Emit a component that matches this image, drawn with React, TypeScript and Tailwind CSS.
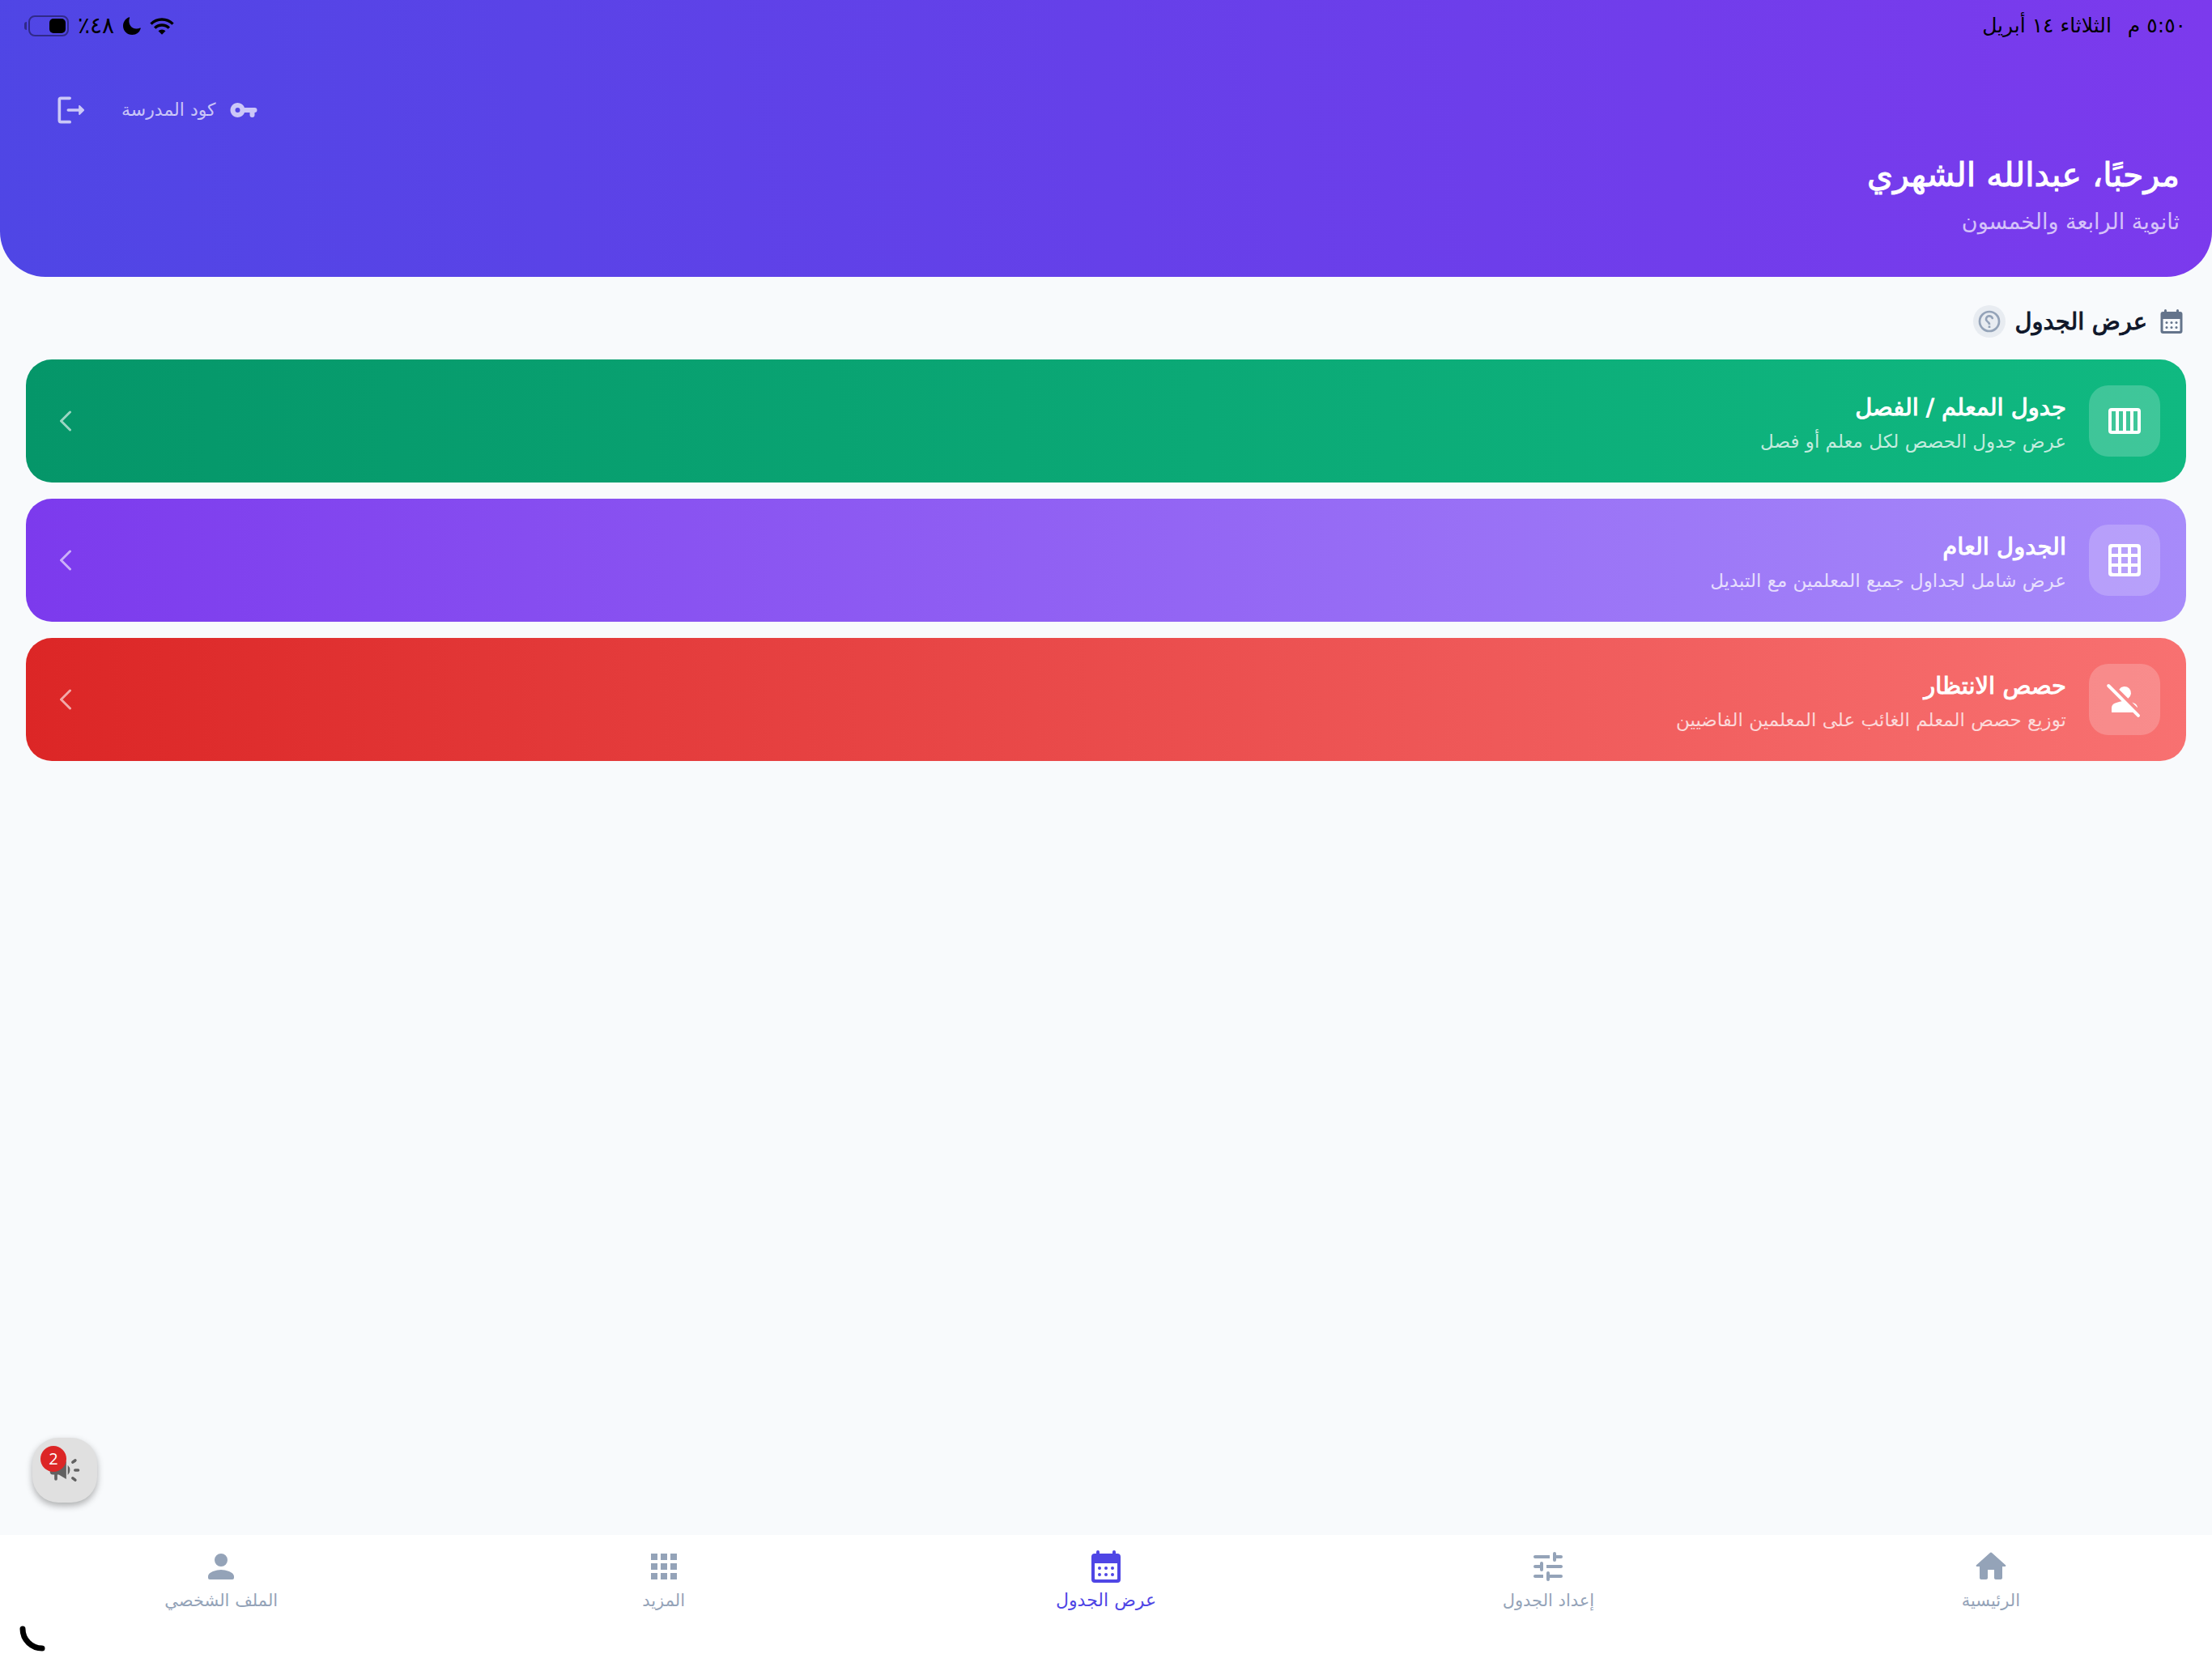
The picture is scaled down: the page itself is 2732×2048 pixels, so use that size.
import React from "react";

type IconProps = { className?: string };

const Svg = ({ className, children }: IconProps & { children: React.ReactNode }) => (
  <svg viewBox="0 0 24 24" className={className} fill="currentColor" aria-hidden="true">
    {children}
  </svg>
);

const CalendarIcon = ({ className }: IconProps) => (
  <Svg className={className}>
    <path
      fillRule="evenodd"
      d="M7 2a1 1 0 0 1 1 1v1h8V3a1 1 0 0 1 2 0v1h1a2 2 0 0 1 2 2v14a2 2 0 0 1-2 2H5a2 2 0 0 1-2-2V6a2 2 0 0 1 2-2h1V3a1 1 0 0 1 1-1ZM5 10v9.500a.5.500 0 0 0 .5.500h13a.5.500 0 0 0 .5-.5V10Z"
    />
    <circle cx="8" cy="13" r="1" />
    <circle cx="12" cy="13" r="1" />
    <circle cx="16" cy="13" r="1" />
    <circle cx="8" cy="17" r="1" />
    <circle cx="12" cy="17" r="1" />
    <circle cx="16" cy="17" r="1" />
  </Svg>
);

const KeyIcon = ({ className }: IconProps) => (
  <Svg className={className}>
    <path
      fillRule="evenodd"
      d="M12.650 10A6 6 0 1 0 12.650 14H17v2a2 2 0 0 0 4 0v-2a2 2 0 0 0 0-4ZM7 14a2 2 0 1 1 0-4 2 2 0 0 1 0 4Z"
    />
  </Svg>
);

const LogoutIcon = ({ className }: IconProps) => (
  <Svg className={className}>
    <path d="M5 5h6a1 1 0 0 0 0-2H5a2 2 0 0 0-2 2v14a2 2 0 0 0 2 2h6a1 1 0 0 0 0-2H5Z" />
    <path d="m20.650 11.650-2.790-2.790a.5.500 0 0 0-.86.350V11h-7a1 1 0 0 0 0 2h7v1.790a.5.500 0 0 0 .85.350l2.790-2.790a.5.500 0 0 0 .01-.7Z" />
  </Svg>
);

const HelpIcon = ({ className }: IconProps) => (
  <Svg className={className}>
    <path fillRule="evenodd" d="M12 2a10 10 0 1 0 0 20 10 10 0 0 0 0-20Zm0 18a8 8 0 1 1 0-16 8 8 0 0 1 0 16Z" />
    <path d="M13 16h-2v2h2Z" />
    <path d="M12.610 6.040c-2.060-.3-3.880.970-4.430 2.790-.18.580.260 1.170.870 1.170h.2c.41 0 .74-.29.880-.67.320-.89 1.270-1.500 2.300-1.280.950.200 1.650 1.130 1.570 2.100-.1 1.340-1.620 1.630-2.450 2.880 0 .01-.01.010-.01.020-.01.020-.02.030-.03.050-.09.150-.18.320-.25.500-.01.030-.03.050-.04.080-.01.020-.01.040-.02.070-.12.340-.2.750-.2 1.250h2c0-.42.110-.77.280-1.070.020-.03.030-.06.050-.09.080-.14.180-.27.280-.39.010-.01.020-.03.030-.04.100-.12.210-.23.330-.34.960-.91 2.260-1.650 1.990-3.560-.24-1.740-1.610-3.210-3.350-3.470Z" />
  </Svg>
);

const WeekIcon = ({ className }: IconProps) => (
  <Svg className={className}>
    <path
      fillRule="evenodd"
      d="M4 4h16a2 2 0 0 1 2 2v12a2 2 0 0 1-2 2H4a2 2 0 0 1-2-2V6a2 2 0 0 1 2-2ZM4 6v12h2.500V6Zm4.500 0v12H11V6ZM13 6v12h2.500V6Zm4.500 0v12H20V6Z"
    />
  </Svg>
);

const GridIcon = ({ className }: IconProps) => (
  <Svg className={className}>
    <path
      fillRule="evenodd"
      d="M4 2h16a2 2 0 0 1 2 2v16a2 2 0 0 1-2 2H4a2 2 0 0 1-2-2V4a2 2 0 0 1 2-2ZM5 4a1 1 0 0 0-1 1v3h4V4Zm5 0v4h4V4Zm6 0v4h4V5a1 1 0 0 0-1-1ZM4 10v4h4v-4Zm6 0v4h4v-4Zm6 0v4h4v-4ZM4 16v3a1 1 0 0 0 1 1h3v-4Zm6 0v4h4v-4Zm6 0v4h3a1 1 0 0 0 1-1v-3Z"
    />
  </Svg>
);

const PersonOffIcon = ({ className }: IconProps) => (
  <Svg className={className}>
    <path d="M8.650 5.820a4 4 0 1 1 5.530 5.530ZM20 17.170c-.02-1.100-.63-2.110-1.610-2.620-.54-.28-1.130-.54-1.770-.76Z" />
    <path d="M21.190 21.190 2.810 2.810A1 1 0 0 0 1.390 4.220l8.890 8.890c-1.810.230-3.390.790-4.670 1.450C4.610 15.070 4 16.100 4 17.220V20h13.170l2.610 2.610a1 1 0 0 0 1.410-1.420Z" />
  </Svg>
);

const HomeIcon = ({ className }: IconProps) => (
  <Svg className={className}>
    <path d="M10 19v-5h4v5c0 .550.450 1 1 1h3c.550 0 1-.45 1-1v-7h1.700c.460 0 .680-.57.330-.87L12.670 3.600a1 1 0 0 0-1.340 0l-8.360 7.530c-.34.300-.13.870.330.870H5v7c0 .550.450 1 1 1h3c.550 0 1-.45 1-1Z" />
  </Svg>
);

const TuneIcon = ({ className }: IconProps) => (
  <Svg className={className}>
    <path d="M3 18c0 .550.450 1 1 1h5v-2H4c-.55 0-1 .450-1 1ZM3 6c0 .550.450 1 1 1h9V5H4c-.55 0-1 .450-1 1Zm10 14v-1h7a1 1 0 0 0 0-2h-7v-1a1 1 0 0 0-2 0v4a1 1 0 0 0 2 0ZM7 10v1H4a1 1 0 0 0 0 2h3v1a1 1 0 0 0 2 0v-4a1 1 0 0 0-2 0Zm14 2c0-.55-.45-1-1-1h-9v2h9c.550 0 1-.45 1-1Zm-5-3a1 1 0 0 0 1-1V7h3a1 1 0 0 0 0-2h-3V4a1 1 0 0 0-2 0v4a1 1 0 0 0 1 1Z" />
  </Svg>
);

const AppsIcon = ({ className }: IconProps) => (
  <Svg className={className}>
    <path d="M4 8h4V4H4Zm6 12h4v-4h-4Zm-6 0h4v-4H4Zm0-6h4v-4H4Zm6 0h4v-4h-4Zm6-10v4h4V4Zm-6 4h4V4h-4Zm6 6h4v-4h-4Zm0 6h4v-4h-4Z" />
  </Svg>
);

const PersonIcon = ({ className }: IconProps) => (
  <Svg className={className}>
    <path d="M12 12a4 4 0 1 0 0-8 4 4 0 0 0 0 8Zm0 2c-2.670 0-8 1.340-8 4v1a1 1 0 0 0 1 1h14a1 1 0 0 0 1-1v-1c0-2.660-5.330-4-8-4Z" />
  </Svg>
);

const CampaignIcon = ({ className }: IconProps) => (
  <Svg className={className}>
    <path d="M18 12a1 1 0 0 0 1 1h2a1 1 0 0 0 0-2h-2a1 1 0 0 0-1 1ZM16.590 16.820a1 1 0 0 0 .2 1.380c.53.400 1.080.810 1.610 1.210a1 1 0 0 0 1.200-1.600l-1.610-1.200a1 1 0 0 0-1.400.210ZM19.810 4.810a1 1 0 0 0-1.400-.2L16.800 5.810a1 1 0 0 0 1.200 1.600l1.610-1.200a1 1 0 0 0 .2-1.400ZM4 9a2 2 0 0 0-2 2v2a2 2 0 0 0 2 2h1v3a1 1 0 0 0 2 0v-3h1l5 3V6L8 9ZM15.500 12A4.500 4.500 0 0 0 14 8.650v6.690A4.480 4.480 0 0 0 15.500 12Z" />
  </Svg>
);

const ChevronIcon = ({ className }: IconProps) => (
  <svg viewBox="0 0 14 26" className={className} fill="none" stroke="currentColor" strokeWidth="3" strokeLinecap="round" strokeLinejoin="round" aria-hidden="true">
    <path d="M12.500 2 1.500 13l11 11" />
  </svg>
);

const WifiIcon = ({ className }: IconProps) => (
  <svg viewBox="0 0 30 21" className={className} fill="none" stroke="currentColor" strokeWidth="3.400" aria-hidden="true">
    <path d="M1.500 7.600a19.200 19.200 0 0 1 27 0" />
    <path d="M6.200 12.600a12.500 12.500 0 0 1 17.600 0" />
    <path d="M10.500 16.300a6.500 6.500 0 0 1 9 0L15 20.700Z" fill="currentColor" stroke="none" />
  </svg>
);

const MoonIcon = ({ className }: IconProps) => (
  <svg viewBox="0 0 22 22" className={className} fill="currentColor" aria-hidden="true">
    <path d="M7.400.3c.4-.2.900.1.700.6C5.600 8 10 14.500 16.500 14.500c1.700 0 3.200-.3 4.600-.9.500-.2.900.2.700.7A11.300 11.300 0 0 1 11.300 22C5 22 0 17.200 0 11 0 6.200 3 2 7.400.3Z" />
  </svg>
);

const cards = [
  {
    title: "جدول المعلم / الفصل",
    text: "عرض جدول الحصص لكل معلم أو فصل",
    tone: "from-[#10b981] to-[#059669]",
    Icon: WeekIcon,
  },
  {
    title: "الجدول العام",
    text: "عرض شامل لجداول جميع المعلمين مع التبديل",
    tone: "from-[#a78bfa] to-[#7c3aed]",
    Icon: GridIcon,
  },
  {
    title: "حصص الانتظار",
    text: "توزيع حصص المعلم الغائب على المعلمين الفاضيين",
    tone: "from-[#f87171] to-[#dc2626]",
    Icon: PersonOffIcon,
  },
];

const tabs = [
  { label: "الرئيسية", Icon: HomeIcon, active: false },
  { label: "إعداد الجدول", Icon: TuneIcon, active: false },
  { label: "عرض الجدول", Icon: CalendarIcon, active: true },
  { label: "المزيد", Icon: AppsIcon, active: false },
  { label: "الملف الشخصي", Icon: PersonIcon, active: false },
];

function StatusBar() {
  return (
    <div className="flex h-16 items-center justify-between ps-8 pe-[30px] text-black">
      <div className="flex items-center gap-5 text-[25px] leading-8">
        <span>٥:٥٠ م</span>
        <span>الثلاثاء ١٤ أبريل</span>
      </div>
      <div className="flex items-center gap-[11px]">
        <WifiIcon className="h-[21px] w-[30px]" />
        <MoonIcon className="size-[22px]" />
        <span className="text-[28px] leading-8">٤٨٪</span>
        <div className="flex items-center gap-[2px]">
          <div className="h-[26px] w-[50px] rounded-lg border-2 border-black/40 p-[2px]">
            <div className="h-full w-5 rounded-[5px] bg-black" />
          </div>
          <div className="h-2.5 w-[3px] rounded-l-full bg-black/40" />
        </div>
      </div>
    </div>
  );
}

export default function App() {
  return (
    <div dir="rtl" lang="ar" className="relative flex min-h-screen flex-col bg-[#f8fafc] font-['DejaVu_Sans',sans-serif]">
      <header className="rounded-b-[56px] bg-linear-[263deg] from-[#7c3aed] to-[#4f46e5] pb-[42px]">
        <StatusBar />
        <div className="mt-6 flex h-24 items-center justify-end gap-10 ps-10 pe-[66px] text-white/70">
          <button type="button" className="flex items-center gap-4 text-[22px] leading-8">
            <KeyIcon className="size-9" />
            كود المدرسة
          </button>
          <button type="button" aria-label="تسجيل الخروج">
            <LogoutIcon className="size-11" />
          </button>
        </div>
        <div className="px-10">
          <h1 className="text-[41px] leading-[64px] font-normal text-white [-webkit-text-stroke:1px]">مرحبًا، عبدالله الشهري</h1>
          <p className="text-[27px] leading-[52px] text-white/70">ثانوية الرابعة والخمسون</p>
        </div>
      </header>

      <main className="flex-1 px-8 pt-8">
        <div className="flex h-[46px] items-center gap-3">
          <CalendarIcon className="size-9 text-[#64748b]" />
          <h2 className="text-[29px] leading-11 font-normal text-[#0f172a] [-webkit-text-stroke:1px]">عرض الجدول</h2>
          <button type="button" aria-label="مساعدة" className="grid size-10 place-items-center rounded-full bg-[#e8ecf1] text-[#94a3b8]">
            <HelpIcon className="size-8 -scale-x-100" />
          </button>
        </div>
        <ul className="mt-6 flex flex-col gap-5">
          {cards.map(({ title, text, tone, Icon }) => (
            <li key={title}>
              <button type="button" className={`flex h-38 w-full items-center gap-7 rounded-4xl bg-linear-[267deg] px-8 text-start text-white ${tone}`}>
                <span className="grid size-22 shrink-0 place-items-center rounded-3xl bg-white/20">
                  <Icon className="size-12" />
                </span>
                <span className="flex flex-1 flex-col pt-1.5">
                  <span className="text-[29px] leading-11 [-webkit-text-stroke:1px]">{title}</span>
                  <span className="text-[23px] leading-10 text-white/75">{text}</span>
                </span>
                <ChevronIcon className="me-2.5 h-[26px] w-3.5 text-white/60" />
              </button>
            </li>
          ))}
        </ul>
      </main>

      <div className="flex justify-end px-10 pb-10">
        <button
          type="button"
          aria-label="الإعلانات"
          className="relative grid size-20 place-items-center rounded-4xl bg-[#e0e0e0] text-[#616161] shadow-[0_4px_8px_rgba(0,0,0,0.3)]"
        >
          <CampaignIcon className="size-11" />
          <span className="absolute top-2.5 left-2.5 grid size-8 place-items-center rounded-full bg-[#dc2626] font-['Open_Sans',sans-serif] text-xl leading-8 text-white">
            2
          </span>
        </button>
      </div>

      <nav className="grid h-38 grid-cols-5 bg-white">
        {tabs.map(({ label, Icon, active }) => (
          <a
            key={label}
            href="#"
            aria-current={active ? "page" : undefined}
            className={active ? "flex flex-col items-center pt-[15px] text-[22px] leading-9 text-[#4f46e5]" : "flex flex-col items-center pt-[15px] text-[21px] leading-9 text-[#94a3b8]"}
          >
            <Icon className="size-12" />
            {label}
          </a>
        ))}
      </nav>
      <svg viewBox="0 0 32 32" className="absolute bottom-2 left-6 size-8" fill="none" stroke="black" strokeWidth="7" strokeLinecap="round" aria-hidden="true">
        <path d="M4 4A24 24 0 0 0 28 28" />
      </svg>
    </div>
  );
}
